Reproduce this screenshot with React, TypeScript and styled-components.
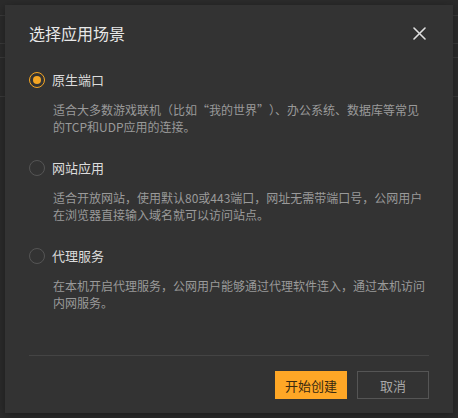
import React, { useState } from "react";
import styled, { createGlobalStyle } from "styled-components";

const Global = createGlobalStyle`
  html, body { margin: 0; padding: 0; }
  body {
    width: 458px;
    height: 418px;
    overflow: hidden;
    background: #2b2b2b;
    font-family: "Noto Sans CJK SC", "Noto Sans", sans-serif;
  }
`;

const Page = styled.div`
  position: relative;
  width: 458px;
  height: 418px;
  background: #2b2b2b;
`;

const BgTable = styled.div`
  display: flex;
  flex-direction: column;
  padding-top: 15px;
`;

const BgRow = styled.div<{ $h: number }>`
  height: ${(p) => p.$h}px;
  border-top: 1px solid #3a3a3a;
  box-sizing: border-box;
`;

const Modal = styled.div`
  position: absolute;
  left: 5px;
  top: 5px;
  width: 448px;
  height: 408px;
  background: #333333;
  box-shadow: 0 2px 8px rgba(0, 0, 0, 0.35);
  display: flex;
  flex-direction: column;
  box-sizing: border-box;
`;

const Header = styled.div`
  display: flex;
  align-items: center;
  justify-content: space-between;
  padding: 16px 24px 0 24px;
  height: 24px;
  box-sizing: content-box;
`;

const Title = styled.div`
  font-size: 16px;
  line-height: 24px;
  color: #e8e8e8;
`;

const CloseBtn = styled.button`
  background: none;
  border: none;
  padding: 0;
  width: 16px;
  height: 16px;
  display: flex;
  align-items: center;
  justify-content: center;
  cursor: pointer;
  margin-right: 2px;
`;

const Body = styled.div`
  flex: 1;
  display: flex;
  flex-direction: column;
  gap: 23px;
  padding: 25px 24px 0 24px;
`;

const Option = styled.div`
  display: flex;
  flex-direction: column;
`;

const LabelRow = styled.label`
  display: flex;
  align-items: center;
  gap: 7px;
  height: 20px;
  cursor: pointer;
`;

const Radio = styled.span<{ $checked: boolean }>`
  width: 16px;
  height: 16px;
  box-sizing: border-box;
  border-radius: 50%;
  border: 1.5px solid ${(p) => (p.$checked ? "#f5a623" : "#555555")};
  display: flex;
  align-items: center;
  justify-content: center;
  &::after {
    content: "";
    width: 8px;
    height: 8px;
    border-radius: 50%;
    background: #f5a623;
    display: ${(p) => (p.$checked ? "block" : "none")};
  }
`;

const LabelText = styled.span`
  font-size: 13px;
  color: #dcdcdc;
  line-height: 20px;
`;

const Desc = styled.div`
  margin-top: 11px;
  padding-left: 24px;
  font-size: 12px;
  line-height: 17px;
  color: #9a9a9a;
`;

const Punct = styled.span<{ $align: "left" | "right" }>`
  display: inline-block;
  width: 1em;
  text-align: ${(p) => p.$align};
`;

const Footer = styled.div`
  margin: 0 24px;
  border-top: 1px solid #444444;
  padding: 15px 0 14px 0;
  display: flex;
  justify-content: flex-end;
  gap: 10px;
`;

const Button = styled.button<{ $primary?: boolean }>`
  width: 72px;
  height: 28px;
  box-sizing: border-box;
  font-family: inherit;
  font-size: 13px;
  cursor: pointer;
  border: 1px solid ${(p) => (p.$primary ? "#ffa726" : "#555555")};
  background: ${(p) => (p.$primary ? "#ffa726" : "transparent")};
  color: ${(p) => (p.$primary ? "#3a2a10" : "#a8a8a8")};
  padding: 0;
`;

const options: { key: string; label: string; desc: React.ReactNode }[] = [
  {
    key: "native",
    label: "原生端口",
    desc: (
      <>
        适合大多数游戏联机（比如<Punct $align="right">“</Punct>我的世界<Punct $align="left">”</Punct>）、办公系统、数据库等常见的TCP和UDP应用的连接。
      </>
    ),
  },
  {
    key: "web",
    label: "网站应用",
    desc: "适合开放网站，使用默认80或443端口，网址无需带端口号，公网用户在浏览器直接输入域名就可以访问站点。",
  },
  {
    key: "proxy",
    label: "代理服务",
    desc: "在本机开启代理服务，公网用户能够通过代理软件连入，通过本机访问内网服务。",
  },
];

export default function App() {
  const [sel, setSel] = useState("native");
  return (
    <Page>
      <Global />
      <BgTable>
        <BgRow $h={28} />
        <BgRow $h={14} />
        <BgRow $h={39} />
        <BgRow $h={40} />
      </BgTable>
      <Modal>
        <Header>
          <Title>选择应用场景</Title>
          <CloseBtn aria-label="close">
            <svg width="13" height="13" viewBox="0 0 13 13">
              <path d="M1 1 L12 12 M12 1 L1 12" stroke="#e0e0e0" strokeWidth="1.6" strokeLinecap="round" />
            </svg>
          </CloseBtn>
        </Header>
        <Body>
          {options.map((o) => (
            <Option key={o.key}>
              <LabelRow onClick={() => setSel(o.key)}>
                <Radio $checked={sel === o.key} />
                <LabelText>{o.label}</LabelText>
              </LabelRow>
              <Desc>{o.desc}</Desc>
            </Option>
          ))}
        </Body>
        <Footer>
          <Button $primary>开始创建</Button>
          <Button>取消</Button>
        </Footer>
      </Modal>
    </Page>
  );
}
